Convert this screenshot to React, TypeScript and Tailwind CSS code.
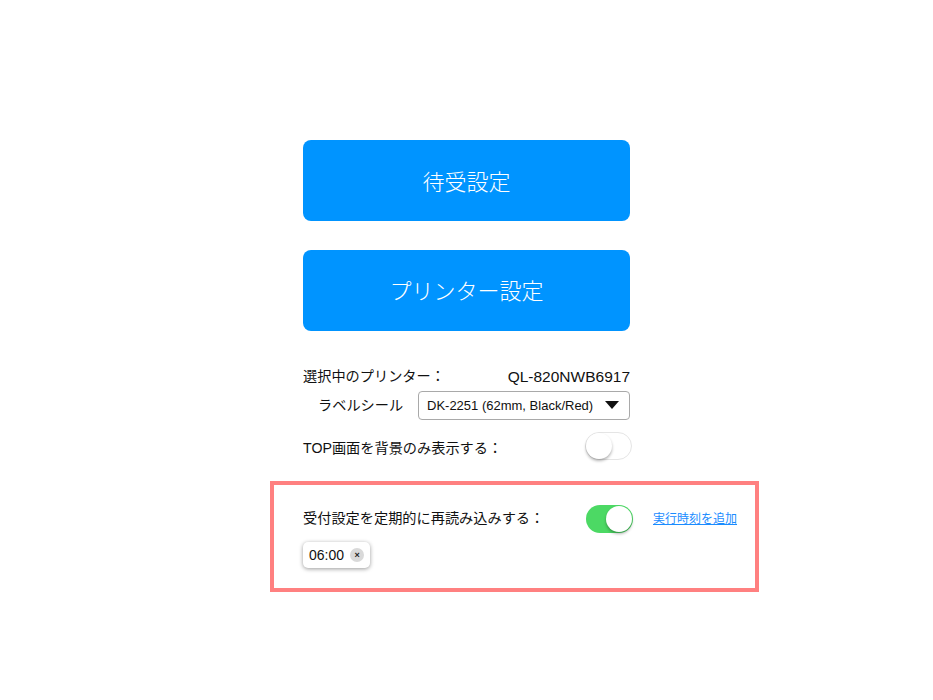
import React from "react";

function Toggle({ on }: { on: boolean }) {
  return (
    <div
      className={
        "relative h-[28px] w-[47px] shrink-0 rounded-full " +
        (on ? "bg-[#4cd964]" : "bg-white border border-[#e5e5e5]")
      }
    >
      <div
        className={
          "absolute h-[26px] w-[26px] rounded-full bg-white shadow-[0_2px_3px_rgba(0,0,0,0.3)] " +
          (on ? "right-[1px] top-[1px]" : "left-[0px] top-[0px]")
        }
      />
    </div>
  );
}

export default function App() {
  return (
    <div
      className="min-h-[700px] w-full bg-white text-[#111]"
      style={{ fontFamily: '"Liberation Sans", "Noto Sans CJK JP", sans-serif' }}
    >
      <div className="mx-auto flex w-[327px] flex-col pt-[140px]">
        <button className="flex h-[81px] w-full items-center justify-center rounded-[8px] bg-[#0094ff] pt-[3px] text-[22px] font-light text-white">
          待受設定
        </button>
        <button className="mt-[29px] flex h-[81px] w-full items-center justify-center rounded-[8px] bg-[#0094ff] pt-[2px] text-[22px] font-light text-white">
          プリンター設定
        </button>

        <div className="mt-[35px] flex h-[22px] items-center justify-between text-[14.2px]">
          <span className="whitespace-nowrap">選択中のプリンター：</span>
          <span className="whitespace-nowrap text-[15.5px]">QL-820NWB6917</span>
        </div>

        <div className="mt-[3px] flex items-center justify-between">
          <span className="whitespace-nowrap pl-[15px] text-[14.2px]">ラベルシール</span>
          <div className="flex h-[29px] w-[212px] shrink-0 items-center justify-between rounded-[4px] border border-[#a9a9a9] pl-[8px] pr-[10px] text-[13px]">
            <span className="whitespace-nowrap">DK-2251 (62mm, Black/Red)</span>
            <svg width="14" height="9" viewBox="0 0 14 9">
              <path d="M0 0 L14 0 L7 8 Z" fill="#111" />
            </svg>
          </div>
        </div>

        <div className="mt-[12px] flex items-center justify-between">
          <span className="whitespace-nowrap pt-[6px] text-[14.2px]">TOP画面を背景のみ表示する：</span>
          <div className="mr-[-2px]">
            <Toggle on={false} />
          </div>
        </div>

        <div className="-ml-[33px] mt-[21px] w-[489px] border-4 border-[#ff8080] pb-[20px] pl-[29px] pt-[20px]">
          <div className="flex items-center">
            <span className="w-[283px] whitespace-nowrap text-[14.2px]">受付設定を定期的に再読み込みする：</span>
            <Toggle on={true} />
            <a className="ml-[20px] whitespace-nowrap text-[12px] text-[#1a8cff] underline" href="#">
              実行時刻を追加
            </a>
          </div>
          <div className="mt-[9px] flex">
            <div className="flex h-[26px] items-center gap-[6px] rounded-[5px] bg-white pl-[6px] pr-[6px] shadow-[0_1px_4px_rgba(0,0,0,0.4)]">
              <span className="text-[14px]">06:00</span>
              <span className="flex h-[14px] w-[14px] items-center justify-center rounded-full bg-[#d9d9d9] text-[9px] font-bold leading-none text-[#222]">
                ×
              </span>
            </div>
          </div>
        </div>
      </div>
    </div>
  );
}
